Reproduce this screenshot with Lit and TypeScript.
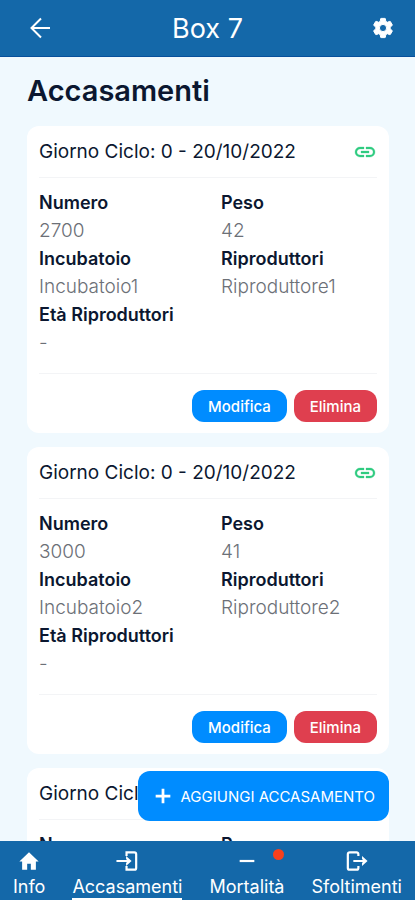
import { LitElement, html, css, svg } from "lit";
import { customElement, property } from "lit/decorators.js";
import { classMap } from "lit/directives/class-map.js";

interface Batch {
  day: number;
  date: string;
  count: number;
  weight: number;
  hatchery: string;
  breeders: string;
  age: string;
}

const batches: Batch[] = [
  { day: 0, date: "20/10/2022", count: 2700, weight: 42, hatchery: "Incubatoio1", breeders: "Riproduttore1", age: "-" },
  { day: 0, date: "20/10/2022", count: 3000, weight: 41, hatchery: "Incubatoio2", breeders: "Riproduttore2", age: "-" },
  { day: 0, date: "20/10/2022", count: 3000, weight: 41, hatchery: "Incubatoio3", breeders: "Riproduttore3", age: "-" },
];

const icons = {
  back: svg`<path d="M22 12H4M13 2.500L3.500 12l9.500 9.500" fill="none" stroke="currentColor" stroke-width="2"/>`,
  gear: svg`<path fill="currentColor" stroke="currentColor" stroke-width="1" stroke-linejoin="round" fill-rule="evenodd" d="M19.140 12.940c.04-.3.060-.61.060-.94 0-.32-.020-.64-.070-.94l2.030-1.580c.18-.14.23-.41.120-.61l-1.920-3.320c-.12-.22-.37-.29-.59-.22l-2.390.96c-.5-.38-1.030-.7-1.620-.94L14.400 2.810c-.04-.24-.24-.41-.48-.41h-3.840c-.24 0-.43.17-.47.41l-.36 2.540c-.59.24-1.130.57-1.620.94l-2.390-.96c-.22-.08-.47 0-.59.22L2.740 8.870c-.12.21-.08.47.120.61l2.030 1.580c-.05.3-.09.63-.09.94s.020.64.070.94l-2.030 1.580c-.18.14-.23.41-.12.61l1.920 3.320c.12.22.37.29.59.22l2.390-.96c.5.38 1.030.7 1.620.94l.36 2.540c.05.24.24.41.48.41h3.840c.24 0 .44-.17.47-.41l.36-2.540c.59-.24 1.130-.56 1.620-.94l2.390.96c.22.08.47 0 .59-.22l1.920-3.320c.12-.22.07-.47-.12-.61zM12 15.600a3.600 3.600 0 1 1 0-7.200 3.600 3.600 0 0 1 0 7.200z"/>`,
  link: svg`<path fill="currentColor" stroke="currentColor" stroke-width=".3" d="M3.900 12c0-1.710 1.390-3.100 3.100-3.100h4V7H7a5 5 0 0 0 0 10h4v-1.900H7c-1.710 0-3.100-1.390-3.100-3.100zM8 13h8v-2H8zm9-6h-4v1.900h4a3.100 3.100 0 0 1 0 6.200h-4V17h4a5 5 0 0 0 0-10z"/>`,
  plus: svg`<path d="M12 4v16M4 12h16" fill="none" stroke="currentColor" stroke-width="3"/>`,
  home: svg`<path fill="currentColor" d="M10 21.500v-6.500h4v6.500h5.500v-9h3L12 2.500 1.500 12.500h3v9z"/>`,
  enter: svg`<path d="M11.500 6.500V2.500H20a2 2 0 0 1 2 2v15a2 2 0 0 1-2 2h-8.500v-4M.5 12H14" fill="none" stroke="currentColor" stroke-width="2.400"/><path d="M11 6.500l6 5.500-6 5.500v-3.200l2-2.300-2-2.300z" fill="currentColor"/>`,
  minus: svg`<path d="M4 12h16" fill="none" stroke="currentColor" stroke-width="2.400"/>`,
  exit: svg`<path d="M13.500 6.500V4.500a2 2 0 0 0-2-2H4a2 2 0 0 0-2 2v15a2 2 0 0 0 2 2h7.500a2 2 0 0 0 2-2v-2M8 12h13" fill="none" stroke="currentColor" stroke-width="2.400"/><path d="M17.500 6.500l6 5.500-6 5.500v-3.200l2-2.300-2-2.300z" fill="currentColor"/>`,
};

type IconName = keyof typeof icons;

@customElement("ui-icon")
class UiIcon extends LitElement {
  @property() name: IconName = "plus";

  static styles = css`
    :host {
      display: block;
      flex: none;
      width: 24px;
      height: 24px;
    }
    .glyph {
      display: block;
      width: 100%;
      height: 100%;
    }
  `;

  render() {
    return html`<svg class="glyph" viewBox="0 0 24 24" aria-hidden="true">${icons[this.name]}</svg>`;
  }
}

@customElement("batch-card")
class BatchCard extends LitElement {
  @property({ attribute: false }) batch!: Batch;

  static styles = css`
    :host {
      display: block;
    }
    .card {
      background: #fff;
      border-radius: 12px;
      padding: 0 12px 11px;
    }
    .head {
      display: flex;
      align-items: center;
      justify-content: space-between;
      height: 51px;
      border-bottom: 1px solid #f3f4f6;
    }
    .title {
      margin: 0;
      font-size: 19px;
      font-weight: 400;
      color: #0b1730;
    }
    .link {
      color: #2fcb80;
    }
    .fields {
      display: grid;
      grid-template-columns: 1fr 1fr;
      column-gap: 26px;
      margin: 0;
      padding: 11px 0 16px;
      border-bottom: 1px solid #f3f4f6;
      line-height: 28px;
    }
    .label {
      font-size: 18px;
      font-weight: 600;
      color: #0b1730;
      white-space: nowrap;
    }
    .value {
      margin: 0;
      font-size: 19px;
      font-weight: 300;
      color: #6c7077;
    }
    .actions {
      display: flex;
      justify-content: flex-end;
      gap: 7px;
      padding-top: 16px;
    }
    .action {
      height: 32px;
      padding: 0 16px;
      border: 0;
      border-radius: 12px;
      font: 500 15px Inter, sans-serif;
      color: #fff;
      background: #008cff;
    }
    .danger {
      background: #df3f4f;
    }
  `;

  field(label: string, value: string | number) {
    return html`<div>
      <dt class="label">${label}</dt>
      <dd class="value">${value}</dd>
    </div>`;
  }

  render() {
    const b = this.batch;
    return html`<article class="card">
      <header class="head">
        <h2 class="title">Giorno Ciclo: ${b.day} - ${b.date}</h2>
        <ui-icon class="link" name="link"></ui-icon>
      </header>
      <dl class="fields">
        ${this.field("Numero", b.count)} ${this.field("Peso", b.weight)}
        ${this.field("Incubatoio", b.hatchery)} ${this.field("Riproduttori", b.breeders)}
        ${this.field("Età Riproduttori", b.age)}
      </dl>
      <div class="actions">
        <button class="action">Modifica</button>
        <button class="action danger">Elimina</button>
      </div>
    </article>`;
  }
}

const tabs: { label: string; icon: IconName; active?: boolean; alert?: boolean }[] = [
  { label: "Info", icon: "home" },
  { label: "Accasamenti", icon: "enter", active: true },
  { label: "Mortalità", icon: "minus", alert: true },
  { label: "Sfoltimenti", icon: "exit" },
];

@customElement("app-root")
class AppRoot extends LitElement {
  static styles = css`
    :host {
      display: flex;
      flex-direction: column;
      height: 100vh;
      font-family: Inter, sans-serif;
      background: #f0f9fe;
    }
    .bar {
      display: grid;
      grid-template-columns: 32px 1fr 32px;
      align-items: center;
      justify-items: end;
      flex: none;
      box-sizing: border-box;
      height: 57px;
      padding: 0 20px;
      border-bottom: 1px solid #07509c;
      background: #1468a9;
      color: #fff;
    }
    .bar-title {
      justify-self: center;
      font-size: 27px;
      font-weight: 400;
    }
    .icon-button {
      padding: 0;
      border: 0;
      background: none;
      color: inherit;
    }
    .body {
      position: relative;
      flex: 1;
      min-height: 0;
    }
    .scroll {
      box-sizing: border-box;
      height: 100%;
      overflow-y: auto;
      scrollbar-width: none;
      padding: 14px 26px 90px 27px;
    }
    .heading {
      margin: 0 0 15px;
      font-size: 29px;
      line-height: 40px;
      font-weight: 600;
      color: #0b1730;
    }
    .list {
      display: flex;
      flex-direction: column;
      gap: 14px;
    }
    .add {
      position: absolute;
      right: 26px;
      bottom: 20px;
      display: flex;
      align-items: center;
      gap: 6px;
      height: 50px;
      padding: 0 14px;
      border: 0;
      border-radius: 12px;
      background: #008cff;
      color: #fff;
      font: 400 15px Inter, sans-serif;
    }
    .add-icon {
      width: 22px;
      height: 22px;
    }
    .tabs {
      display: flex;
      justify-content: space-between;
      flex: none;
      height: 59px;
      padding: 0 13px;
      background: #1468a9;
    }
    .tab {
      position: relative;
      display: flex;
      flex-direction: column;
      align-items: center;
      gap: 4px;
      box-sizing: border-box;
      padding-top: 9px;
      border-bottom: 2px solid transparent;
      color: #fff;
      text-decoration: none;
      font-size: 18px;
      line-height: 22px;
    }
    .active {
      border-bottom-color: #fff;
    }
    .tab-icon {
      width: 22px;
      height: 22px;
    }
    .dot {
      position: absolute;
      top: 8px;
      right: 0;
      width: 11px;
      height: 11px;
      border-radius: 50%;
      background: #f8401c;
    }
  `;

  render() {
    return html`
      <header class="bar">
        <button class="icon-button" aria-label="Indietro"><ui-icon name="back"></ui-icon></button>
        <span class="bar-title">Box 7</span>
        <button class="icon-button" aria-label="Impostazioni"><ui-icon name="gear"></ui-icon></button>
      </header>
      <div class="body">
        <main class="scroll">
          <h1 class="heading">Accasamenti</h1>
          <div class="list">${batches.map((b) => html`<batch-card .batch=${b}></batch-card>`)}</div>
        </main>
        <button class="add"><ui-icon class="add-icon" name="plus"></ui-icon>AGGIUNGI ACCASAMENTO</button>
      </div>
      <nav class="tabs">
        ${tabs.map(
          (t) => html`<a href="#" class=${classMap({ tab: true, active: !!t.active })}>
            <ui-icon class="tab-icon" name=${t.icon}></ui-icon>
            <span>${t.label}</span>
            ${t.alert ? html`<span class="dot"></span>` : ""}
          </a>`
        )}
      </nav>
    `;
  }
}
